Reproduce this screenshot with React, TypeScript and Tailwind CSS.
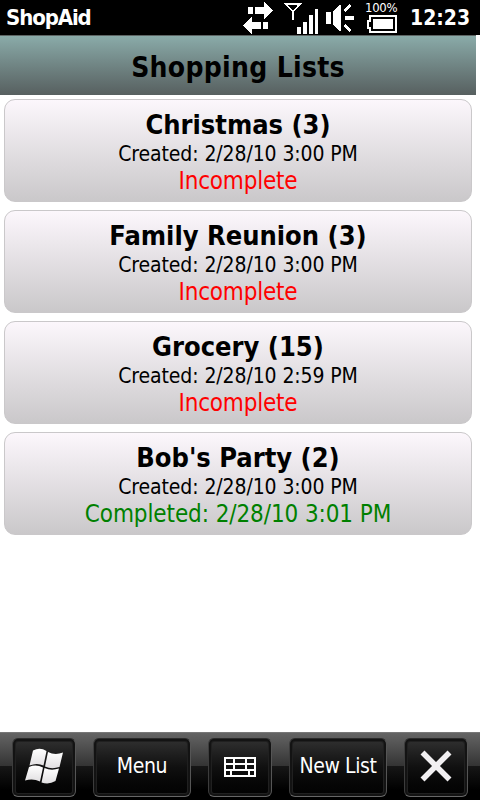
import type { ReactNode } from 'react';

type ShoppingList = { title: string; created: string; completed?: string };

const lists: ShoppingList[] = [
  { title: 'Christmas (3)', created: '2/28/10 3:00 PM' },
  { title: 'Family Reunion (3)', created: '2/28/10 3:00 PM' },
  { title: 'Grocery (15)', created: '2/28/10 2:59 PM' },
  { title: "Bob's Party (2)", created: '2/28/10 3:00 PM', completed: '2/28/10 3:01 PM' },
];

function StatusIcons() {
  return (
    <svg width="156" height="35" viewBox="243 0 156 35" fill="#fff" shapeRendering="crispEdges">
      <path d="M248 7h5v7h-5zM255 7h9V2h1l8 8.500-8 8.500h-1v-5h-9zM263 22h5v7h-5zM261 22h-9v-5h-1l-8 8.500 8 8.500h1v-5h9z" />
      <path d="M286 4h14l-7 7.500zM293 10v10" fill="none" stroke="#fff" strokeWidth="1.600" />
      <path d="M297 27h4v7h-4zM303 22h4v12h-4zM309 15h4v19h-4zM315 9h3v25h-3z" />
      <path d="M326 12h5v12h-5zM333 12l6-7h2v26h-2l-6-7zM345 16h9v4h-9z" />
      <path d="M344.500 11l6-6M344.500 25l6 6" stroke="#fff" strokeWidth="3.500" />
      <path d="M369 15h28v18h-28v-4h-2v-9h2zM371 17v5h-2v5h2v4h24V17z" fillRule="evenodd" />
      <path d="M373 19h20v10h-20z" />
    </svg>
  );
}

function WindowsFlag() {
  return (
    <svg width="38" height="36" viewBox="25 747 38 36" className="relative -top-[1px]">
      <defs>
        <linearGradient id="flag" x1="0" y1="0" x2="0" y2="1">
          <stop offset="0" stopColor="#fff" />
          <stop offset="1" stopColor="#e2e0e2" />
        </linearGradient>
      </defs>
      <g fill="url(#flag)">
        <path d="M33 749.500Q40 746 46.500 750L43.500 764.500Q37 761.500 29.500 764.500Z" />
        <path d="M48 751Q55 754.500 63 751.500L59.500 766Q51.500 768.500 45 765.500Z" />
        <path d="M29 766Q36 763 43 766.500L40 780.500Q33 777 25 779.500Z" />
        <path d="M44.500 767Q51 770 59 767.500L55.500 780Q49 784 41.500 781.500Z" />
      </g>
    </svg>
  );
}

function Keyboard() {
  return (
    <svg width="32" height="20" viewBox="0 0 32 20" fill="none" stroke="#fff" strokeWidth="2" shapeRendering="crispEdges">
      <path d="M1 1h30v18H1zM1 7h30M1 13h30M10 1v12M22 1v12M7 13v6M25 13v6" />
    </svg>
  );
}

function Cross() {
  return (
    <svg width="32" height="32" viewBox="0 0 32 32" className="relative -top-[1px]">
      <path d="M2.500 2.500L29.500 29.500M29.500 2.500L2.500 29.500" stroke="#f2f0f2" strokeWidth="5.600" />
    </svg>
  );
}

function SoftButton({ wide, children }: { wide?: boolean; children: ReactNode }) {
  return (
    <button
      className={`${wide ? 'w-[98px]' : 'w-16'} flex h-[59px] shrink-0 items-center justify-center rounded-[6px] border border-t-[#2a2a2a] border-r-[#555] border-b-[#686868] border-l-[#3c3c3c] bg-linear-to-b from-[#313131] via-[#101010] to-[#020202] pb-px text-[21px] tracking-[-0.4px] whitespace-nowrap text-white shadow-[inset_0_0_0_2px_#131313,inset_0_0_0_3px_#202020]`}
    >
      {children}
    </button>
  );
}

export default function App() {
  return (
    <div className="flex h-[800px] w-[480px] flex-col overflow-hidden bg-white font-['DejaVu_Sans_Condensed','DejaVu_Sans',sans-serif] font-stretch-condensed text-black">
      <header className="flex h-[35px] shrink-0 bg-black text-white">
        <div className="w-[243px] pl-[6px] text-[22px] leading-[36px] font-bold tracking-[-1.1px]">ShopAid</div>
        <div className="relative h-[35px] w-[156px]">
          <StatusIcons />
          <span className="absolute top-[1px] left-[122px] text-[13px] leading-[14px] tracking-[-0.3px]">100%</span>
        </div>
        <div className="pl-[11px] text-[21px] leading-[37px] font-bold">12:23</div>
      </header>
      <h1 className="flex h-[60px] w-[476px] shrink-0 items-center justify-center border-t border-[#5d6463] bg-linear-to-b from-[#8aaba9] to-[#576060] pt-[4px] text-[28px] font-bold tracking-[0.3px]">
        Shopping Lists
      </h1>
      <main className="flex flex-1 flex-col gap-2 px-1 pt-1">
        {lists.map((list) => (
          <section
            key={list.title}
            className="flex h-[103px] w-[468px] flex-col items-center rounded-[11px] border border-[#cac8ca] bg-linear-to-b from-[#fcf7fc] to-[#cac8ca] pt-[8px] whitespace-nowrap"
          >
            <h2 className="text-[27px] leading-[33px] font-bold">{list.title}</h2>
            <p className="text-[21px] leading-[27px] tracking-[-0.1px]">Created: {list.created}</p>
            {list.completed ? (
              <p className="text-[24px] leading-[27px] tracking-[-0.1px] text-[#008000]">Completed: {list.completed}</p>
            ) : (
              <p className="text-[24px] leading-[27px] tracking-[-0.2px] text-[#ff0000]">Incomplete</p>
            )}
          </section>
        ))}
      </main>
      <nav className="flex h-[68px] shrink-0 gap-[17px] border-t border-[#777] bg-[linear-gradient(#646464,#333_50%,#161616_50%,#000_85%)] pt-[5px] pl-3">
        <SoftButton><WindowsFlag /></SoftButton>
        <SoftButton wide>Menu</SoftButton>
        <SoftButton><Keyboard /></SoftButton>
        <SoftButton wide>New List</SoftButton>
        <SoftButton><Cross /></SoftButton>
      </nav>
    </div>
  );
}
